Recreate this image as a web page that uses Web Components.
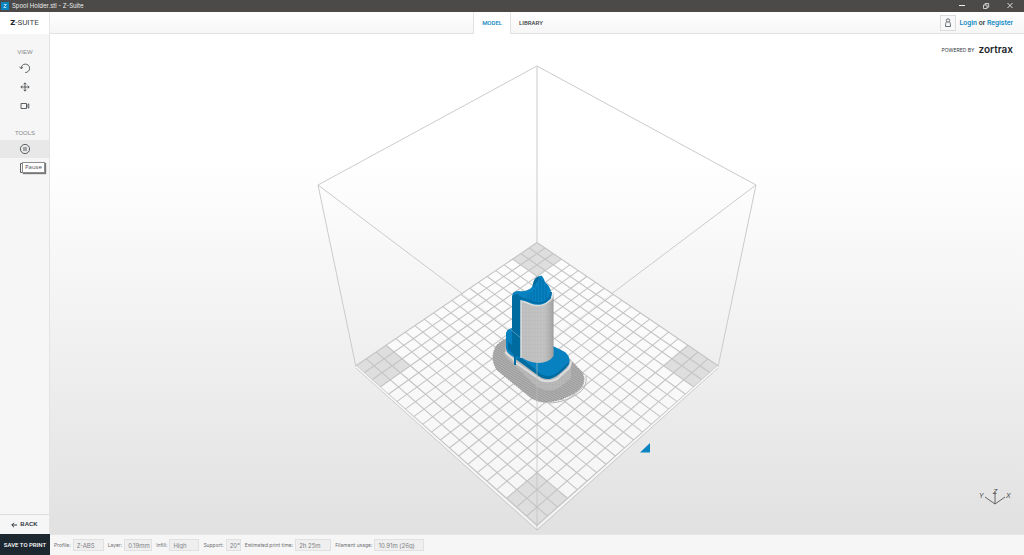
<!DOCTYPE html>
<html lang="en">
<head>
<meta charset="utf-8">
<meta name="viewport" content="width=device-width, initial-scale=1">
<title>Spool Holder.stl - Z-Suite</title>
<style>
html, body { margin: 0; height: 100%; }
body { font-family: Inter, "Liberation Sans", sans-serif; color: #2b3136; }
</style>
</head>
<body>
<z-app></z-app>
<script>
function define(name, html, setup) {
  const template = document.createElement('template');
  template.innerHTML = '<style>*{box-sizing:border-box}</style>' + html;
  customElements.define(name, class extends HTMLElement {
    connectedCallback() {
      if (this.shadowRoot) return;
      this.attachShadow({ mode: 'open' }).append(template.content.cloneNode(true));
      if (setup) setup(this, this.shadowRoot);
    }
  });
}

define('z-titlebar', `
<style>
:host { display: flex; align-items: center; height: 12px; background: #4c4a48; color: #f0f0f0; font: 6px/12px Inter, sans-serif; padding: 0 9px 0 1px; gap: 3px; }
.logo { width: 8px; height: 8px; background: #0a84c1; display: block; }
.name { flex: 1; }
.controls { display: flex; gap: 14px; }
button { all: unset; width: 10px; height: 10px; display: block; }
svg { display: block; width: 10px; height: 10px; }
</style>
<svg class="logo" viewBox="0 0 8 8"><path d="M2.7 2.5h2.6L2.8 5.5h2.6" fill="none" stroke="#d5edf9" stroke-width=".8"/></svg>
<span class="name"><slot></slot></span>
<div class="controls">
<button aria-label="Minimize"><svg viewBox="0 0 10 10"><path d="M2 4.500h6" stroke="#eee"/></svg></button>
<button aria-label="Restore"><svg viewBox="0 0 10 10"><path d="M2.500 4h3.500v3.500h-3.500zM4 4V2.500h3.700v3.700H6" fill="none" stroke="#eee" stroke-width=".8"/></svg></button>
<button aria-label="Close"><svg viewBox="0 0 10 10"><path d="M2.500 2l5 5m0-5l-5 5" stroke="#eee" stroke-width=".9"/></svg></button>
</div>`);

define('z-header', `
<style>
:host { display: grid; grid-template-columns: 1fr auto 1fr; height: 22px; background: linear-gradient(#fff, #f6f6f6); border-bottom: 1px solid #e2e2e2; }
.brand { width: 50px; background: #fff; border-right: 1px solid #e6e6e6; font: 8px/21px Roboto, sans-serif; text-align: center; color: #3b4146; }
.brand b { font-weight: 900; color: #22282d; }
nav { display: flex; font: 500 6px/22px Roboto, sans-serif; margin-right: 8px; }
nav a { color: #3a3f43; text-decoration: none; padding: 0 0 0 8px; height: 21px; }
nav a.on { color: #0a84c1; background: #fff; border: solid #e2e2e2; border-width: 0 1px; height: 22px; padding: 0 8px; }
.account { display: flex; align-items: center; justify-content: flex-end; gap: 4px; padding-right: 11px; font: 500 7px/20px Roboto, sans-serif; }
.account a { color: #0a84c1; text-decoration: none; }
.account button { width: 16px; height: 16px; border: 1px solid #dcdcdc; background: #f8f8f8; padding: 0; margin: 0; }
svg { display: block; width: 14px; height: 14px; }
</style>
<div class="brand"><b>Z</b>-SUITE</div>
<nav><a class="on" href="#model">MODEL</a><a href="#library">LIBRARY</a></nav>
<div class="account">
<button aria-label="Account"><svg viewBox="0 0 14 14" fill="none" stroke="#444a4f" stroke-width=".8"><circle cx="7" cy="4.500" r="1.700"/><path d="M5.700 5.800C4.800 6.500 4.500 8 4.500 10.500h5c0-2.500-.3-4-1.200-4.700"/></svg></button>
<span><a href="#login">Login</a> or <a href="#register">Register</a></span>
</div>`);

define('z-tool', `
<style>
:host { display: block; }
button { display: flex; width: 100%; height: 18px; border: 0; padding: 0 0 0 1px; background: none; align-items: center; justify-content: center; }
:host([active]) button { background: #e8e8e8; }
::slotted(svg) { width: 12px; height: 12px; fill: none; stroke: #4c5155; stroke-width: .9; }
</style>
<button><slot></slot></button>`, (el, root) => root.querySelector('button').setAttribute('aria-label', el.getAttribute('label')));

define('z-sidebar', `
<style>
:host { display: flex; flex-direction: column; background: #f6f6f6; border-right: 1px solid #e3e3e3; }
section { display: flex; flex-direction: column; gap: 1px; padding-top: 14px; position: relative; }
h2 { margin: 0 0 2px; padding-left: 1px; font: 6px/8px "Liberation Sans", sans-serif; color: #85888a; text-align: center; }
.tip { position: absolute; left: 22px; top: 47px; background: #fff; border: 1px solid #8e8e8e; box-shadow: 1px 1px 1px #777; padding: 0 2px; font: 6px/9px "Open Sans", sans-serif; color: #464646; }
.back { all: unset; box-sizing: border-box; margin-top: auto; height: 20px; border-top: 1px solid #dedede; display: flex; align-items: center; justify-content: center; gap: 3px; font: 700 6px/19px "Liberation Sans", sans-serif; color: #33393e; }
.back svg { width: 6px; height: 6px; }
</style>
<section class="view"><h2>VIEW</h2>
<z-tool label="Rotate"><svg viewBox="0 0 12 12"><path d="M2.200 6.500a4.200 4.200 0 1 1 4 4M.6 4.700L2.200 6.700l1.900-1.500"/></svg></z-tool>
<z-tool label="Move"><svg viewBox="0 0 12 12"><path d="M6 2v8M2 6h8M4.700 3.300L6 1.800l1.300 1.500M4.700 8.700L6 10.200l1.300-1.500M3.300 4.700L1.800 6l1.500 1.300M8.700 4.700L10.200 6 8.700 7.300"/></svg></z-tool>
<z-tool label="Camera"><svg viewBox="0 0 12 12"><path d="M2 3.500h5.500v5H2zM7.500 6L9.800 3.800v4.400z"/></svg></z-tool>
</section>
<section class="tools"><h2>TOOLS</h2>
<z-tool label="Pause" active><svg viewBox="0 0 12 12"><circle cx="6" cy="6" r="4.600"/><path d="M5 4v4M7 4v4"/></svg></z-tool>
<z-tool label="Layers"><svg viewBox="0 0 12 12"><path d="M1.500 1.500h8v9h-8z"/></svg></z-tool>
<span class="tip" role="tooltip">Pause</span>
</section>
<button class="back"><svg viewBox="0 0 6 6"><path d="M6 3H.8M3 .8L.8 3 3 5.200" fill="none" stroke="#33393e"/></svg>BACK</button>`);

define('z-stage', `
<style>
:host { display: block; position: relative; overflow: hidden; min-height: 0; background: linear-gradient(#fff 25%, #e1e1e1); }
.scene { display: block; width: 100%; height: 100%; }
.powered { position: absolute; top: 7px; right: 11px; display: flex; align-items: center; gap: 4px; font: 5px/14px Inter, sans-serif; color: #33393e; }
.powered span { padding-top: 2px; }
.powered b { font: 600 10px/14px Inter, sans-serif; color: #20262b; }
.axes { position: absolute; right: 10px; bottom: 26px; width: 36px; height: 24px; }
.axes text { font: italic 7px "Liberation Sans", sans-serif; fill: #444; }
</style>
<svg class="scene" viewBox="50 34 974 500" role="img" aria-label="Print volume">
<defs>
<pattern id="wall" width="3" height="4" patternUnits="userSpaceOnUse"><rect width="3" height="4" fill="#b9b9b9"/><path d="M0 .5h3" stroke="#b2b2b2" stroke-width=".5"/><path d="M1 0v4" stroke="#adadad" stroke-width=".5"/></pattern>
<pattern id="raft" width="3" height="2" patternUnits="userSpaceOnUse" patternTransform="rotate(30)"><rect width="3" height="2" fill="#b2b2b2"/><path d="M0 .5h3" stroke="#929292" stroke-width=".7"/></pattern>
<linearGradient id="tube"><stop offset="0" stop-color="#fff" stop-opacity=".1"/><stop offset=".7" stop-color="#fff" stop-opacity=".15"/><stop offset="1" stop-color="#555" stop-opacity=".25"/></linearGradient>
</defs>
<g fill="none" stroke="#cbcbcb"><path d="M537 242V66L318 185 356 367M537 66l219 119-38 182M318 185L537 350 756 185"/></g>
<g id="bed"></g>
<path d="M356 368L537 530 718 368" fill="none" stroke="#c8c8c8"/>
<path d="M356 366.500L537 528 718 366.500" fill="none" stroke="#f8f8f8" stroke-width="1.500"/>
<g id="model">
<path d="M497 345Q505 337 515 337L561 350 582 372Q588 384 576 392 562 401 548 402 538 403 530 397L497 370Q489 357 497 345Z" fill="url(#raft)" stroke="#999" stroke-dasharray="1.500 1"/>
<path d="M586 376Q588 388 576 395 562 403 549 403" fill="none" stroke="#b5b5b5"/>
<path d="M505 346V356L511 362 537 387Q549 394 560 387L571 378V361L549 345Z" fill="url(#wall)"/>
<path d="M505 352L513 359 515 362 541 380Q549 383 557 379L568 369Q571 366 571 361" fill="none" stroke="#dedede" stroke-width="2"/>
<path d="M506 333Q507 329 512 328V297Q512 291 518 291 528 292 532 287 534 278 541 275.500 543 276 545 282 552 288 551 295L553 346 565 352Q571 357 569 364 568 367 559 374 548 383 539 376L516 359V365H514V357Q507 354 506 348Z" fill="#0881c0"/>
<path d="M512 297Q516 291 521 297V358L516 356V365H514V355L508 349V340L512 337Z" fill="#006b9f"/>
<path d="M506 334Q510 327 512 334V345L507 341Z" fill="#0881c0"/>
<path d="M510 329L521 338" stroke="#77a9c4" stroke-width=".7"/>
<path d="M521 358L537 370Q548 379 558 370L569 361Q569 366 559 374 548 383 539 376L516 359Z" fill="#006c9f"/>
<path d="M521 357L538 372Q548 380 558 372L569 362 560 353H521Z" fill="#0881c0"/>
<path d="M536 281L534 288M540 278v23M543 280v20M546 285v14M537 287v14M534 290v10M531 293v7M528 295v4" stroke="#006ea6" stroke-width=".9"/>
<path d="M533 286Q533 277 540 276L537 282Z" fill="#006a9c"/>
<path d="M521 301Q526 302 530 304 540 308 548 302 553 299 553.500 292V356Q549 363 538 363 527 362 521 357Z" fill="url(#wall)"/>
<path d="M521 301Q526 302 530 304 540 308 548 302 553 299 553.500 292V356Q549 363 538 363 527 362 521 357Z" fill="url(#tube)"/>
<path d="M521 358V301Q526 302 530 304 540 308 548 302 553 299 553.500 293" fill="none" stroke="#dcdcdc" stroke-width="1.500"/>
<path d="M518 297Q522 298 530 301 541 306 548 299 551 297 551 292" fill="none" stroke="#006ea6" stroke-width="2"/>
</g>
<path d="M537 363V530" stroke="#bbb" stroke-opacity=".65"/>
<path d="M640 452.500L650 443V452.500Z" fill="#0a84c1"/>
</svg>
<div class="powered"><span>POWERED BY</span> <b>zortrax</b></div>
<svg class="axes" viewBox="0 0 36 24"><path d="M17 20V8M17 20L7 13M17 20l10-7" fill="none" stroke="#555" stroke-width=".9"/><text x="1" y="14">Y</text><text x="15" y="10">Z</text><text x="28" y="14">X</text></svg>
`, (el, root) => {
  // Perspective projection of the square print bed; u and v run from the back corner.
  const project = (u, v) => {
    const w = 1 - 0.1133 * (u + v);
    return (537 - 160.5 * (u - v) / w).toFixed(2) + ' ' + ((242.5 + 81.8 * (u + v)) / w).toFixed(2);
  };
  const quad = (a, b, c, d) => `M${project(a, b)}L${project(c, b)} ${project(c, d)} ${project(a, d)}Z`;
  let lines = '';
  for (let i = 0; i <= 20; i++) {
    const t = i / 20;
    lines += `M${project(t, 0)}L${project(t, 1)}M${project(0, t)}L${project(1, t)}`;
  }
  const corners = [[0, 0], [.85, 0], [0, .85], [.85, .85]].map(([a, b]) => quad(a, b, a + .15, b + .15)).join('');
  root.getElementById('bed').innerHTML =
    `<path d="${quad(0, 0, 1, 1)}" fill="#fff" fill-opacity=".65"/><path d="${corners}" fill="#dedede"/><path d="${lines}" fill="none" stroke="#c4c4c4" stroke-width="1.1"/>`;
});

define('z-field', `
<style>
:host { display: flex; align-items: center; gap: 2px; }
label { font: 5px/12px Inter, sans-serif; color: #6c6f71; white-space: nowrap; }
input { width: var(--w); height: 12px; margin: 0; padding: 0 0 0 3px; border: 1px solid #e0e0e0; border-radius: 0; background: #efefef; font: 6px/10px Inter, sans-serif; color: #808284; }
</style>
<label for="v"></label><input id="v" readonly>`, (el, root) => {
  root.querySelector('label').textContent = el.getAttribute('label');
  root.querySelector('input').value = el.getAttribute('value');
  root.querySelector('input').style.setProperty('--w', el.getAttribute('size') + 'px');
});

define('z-status', `
<style>
:host { display: flex; height: 21px; background: #f6f6f6; }
.save { all: unset; width: 50px; background: #1d2730; color: #fff; font: 500 6px/21px Roboto, sans-serif; text-align: center; }
.fields { flex: 1; display: flex; align-items: center; gap: 4px; padding-left: 4px; border-top: 1px solid #e6e6e6; }
</style>
<button class="save">SAVE TO PRINT</button>
<div class="fields">
<z-field label="Profile:" value="Z-ABS" size="31"></z-field>
<z-field label="Layer:" value="0.19mm" size="28"></z-field>
<z-field label="Infill:" value="High" size="30"></z-field>
<z-field label="Support:" value="20°" size="15"></z-field>
<z-field label="Estimated print time:" value="2h 25m" size="36"></z-field>
<z-field label="Filament usage:" value="10.91m (26g)" size="50"></z-field>
</div>`);

define('z-app', `
<style>
:host { display: grid; grid-template: auto auto 1fr auto / 50px 1fr; height: 100vh; }
z-titlebar, z-header, z-status { grid-column: 1 / -1; }
</style>
<z-titlebar>Spool Holder.stl - Z-Suite</z-titlebar>
<z-header></z-header>
<z-sidebar></z-sidebar>
<z-stage></z-stage>
<z-status></z-status>`);
</script>
</body>
</html>
